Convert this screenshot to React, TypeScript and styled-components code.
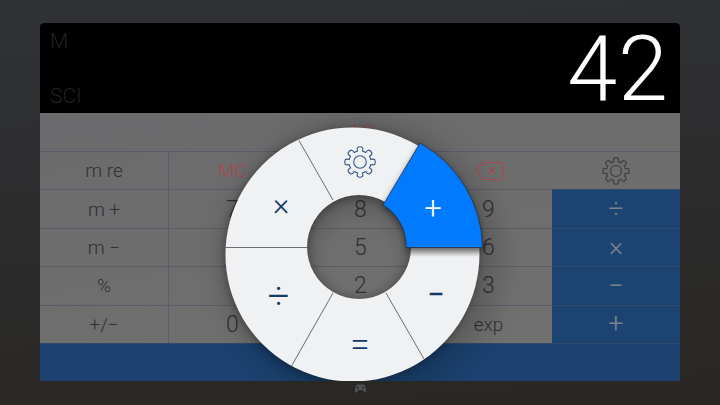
import styled, { createGlobalStyle } from 'styled-components'

const GlobalStyle = createGlobalStyle`
  html, body {
    margin: 0;
    height: 100%;
    overflow: hidden;
    background: #2b2b2b;
  }
  body {
    font-family: Roboto, 'Liberation Sans', sans-serif;
  }
`

// builds an 8 tooth cog outline around 0,0
function gearPath(outer: number, root: number, teeth = 8) {
  const step = (Math.PI * 2) / teeth
  const pt = (r: number, a: number) =>
    `${(r * Math.cos(a)).toFixed(2)} ${(r * Math.sin(a)).toFixed(2)}`
  let d = ''
  for (let i = 0; i < teeth; i++) {
    const a = i * step - Math.PI / 2
    d += `${i === 0 ? 'M' : 'L'}${pt(root, a - step * 0.3)} `
    d += `Q${pt(outer * 0.96, a - step * 0.3)} ${pt(outer, a - step * 0.18)} `
    d += `Q${pt(outer * 1.04, a)} ${pt(outer, a + step * 0.18)} `
    d += `Q${pt(outer * 0.96, a + step * 0.3)} ${pt(root, a + step * 0.3)} `
    d += `A${root} ${root} 0 0 1 ${pt(root, a + step * 0.7)} `
  }
  return d + 'Z'
}

function Gear({ x, y, r, color }: { x: number; y: number; r: number; color: string }) {
  return (
    <g transform={`translate(${x} ${y})`} fill="none" stroke={color} strokeWidth="1.1">
      <path d={gearPath(r, r * 0.74)} strokeLinejoin="round" />
      <circle r={r * 0.42} />
    </g>
  )
}

type Tone = 'red' | 'op' | 'digit'

const keys: { label: string; tone?: Tone }[] = [
  { label: 'm re' },
  { label: 'MC', tone: 'red' },
  { label: 'MR', tone: 'red' },
  { label: 'back', tone: 'red' },
  { label: 'gear' },
  { label: 'm +' },
  { label: '7', tone: 'digit' },
  { label: '8', tone: 'digit' },
  { label: '9', tone: 'digit' },
  { label: '÷', tone: 'op' },
  { label: 'm −' },
  { label: '4', tone: 'digit' },
  { label: '5', tone: 'digit' },
  { label: '6', tone: 'digit' },
  { label: '×', tone: 'op' },
  { label: '%' },
  { label: '1', tone: 'digit' },
  { label: '2', tone: 'digit' },
  { label: '3', tone: 'digit' },
  { label: '−', tone: 'op' },
  { label: '+/−' },
  { label: '0', tone: 'digit' },
  { label: '.', tone: 'digit' },
  { label: 'exp' },
  { label: '+', tone: 'op' },
]

const ring =
  'M352.5 127.5A127 127 0 1 1 352.4 127.5Z M359 195A52 52 0 1 0 359.1 195Z'

export default function App() {
  return (
    <>
      <GlobalStyle />
      <Page>
        <Calculator>
          <Display>
            <Flags>
              <span>M</span>
              <span>SCI</span>
            </Flags>
            <Result>42</Result>
          </Display>

          <ClearRow>AC</ClearRow>

          <Keypad>
            {keys.map((k) => (
              <Key key={k.label} $tone={k.tone}>
                {k.label === 'back' ? (
                  <svg width="30" height="20" viewBox="0 0 30 20" fill="none" stroke="#a8494b" strokeWidth="1.1">
                    <path d="M1.5 9.5 L9.5 1.5 H27 a1.5 1.5 0 0 1 1.5 1.5 V17 a1.5 1.5 0 0 1 -1.5 1.5 H9.5 Z" strokeLinejoin="round" />
                    <path d="M14.5 6 L21.5 13 M21.5 6 L14.5 13" />
                  </svg>
                ) : k.label === 'gear' ? (
                  <svg width="30" height="30" viewBox="0 0 30 30">
                    <Gear x={15} y={15} r={13} color="#3d3d3f" />
                  </svg>
                ) : (
                  k.label
                )}
              </Key>
            ))}
          </Keypad>

          <BlueBar />

          <Wheel viewBox="200 110 300 290">
            <defs>
              <radialGradient id="hole" cx="0.5" cy="0.6" r="0.6">
                <stop offset="0.5" stopColor="#000" stopOpacity="0" />
                <stop offset="1" stopColor="#000" stopOpacity="0.16" />
              </radialGradient>
              <linearGradient id="under" x1="0" y1="0" x2="0" y2="1">
                <stop offset="0" stopColor="#000" stopOpacity="0.35" />
                <stop offset="1" stopColor="#000" stopOpacity="0" />
              </linearGradient>
              <clipPath id="ringClip">
                <path d={ring} clipRule="evenodd" />
              </clipPath>
            </defs>

            <circle cx="359" cy="247" r="52" fill="url(#hole)" />
            <RingHalo cx="352.5" cy="254.5" r="127" />
            <RingShape d={ring} fillRule="evenodd" />

            <g stroke="#6c6d70" strokeWidth="1">
              <line x1="299" y1="140.5" x2="333" y2="200" />
              <line x1="225.5" y1="247.5" x2="307" y2="247.5" />
              <line x1="291.5" y1="366" x2="333" y2="293" />
              <line x1="386" y1="293" x2="424" y2="359" />
            </g>

            <rect x="405" y="247" width="80" height="10" fill="url(#under)" clipPath="url(#ringClip)" />

            <Gear x={360} y={162} r={15} color="#2f5585" />

            <ActiveSlice d="M383 205 L420 143 A122 122 0 0 1 482.6 247.5 L406 247.5 A47 47 0 0 0 383 205 Z" />

            <WheelGlyph x="281" y="215" $size={31}>×</WheelGlyph>
            <WheelGlyph x="278.5" y="309" $size={38}>÷</WheelGlyph>
            <WheelGlyph x="360" y="355.5" $size={35}>=</WheelGlyph>
            <WheelGlyph x="436" y="304.5" $size={31} $bold>−</WheelGlyph>
            <WheelGlyph x="433" y="219" $size={31} fill="#fff">+</WheelGlyph>
          </Wheel>
        </Calculator>

        <Dock width="13" height="9" viewBox="0 0 13 10">
          <path d="M3 0.5 H10 C11.5 0.5 12.6 5 12.8 8 C12.9 10 11 10 10 8.5 L9 7 H4 L3 8.5 C2 10 0.1 10 0.2 8 C0.4 5 1.5 0.5 3 0.5 Z M3.5 3 a1 1 0 1 0 .01 0 Z M9.5 3 a1 1 0 1 0 .01 0 Z" fillRule="evenodd" />
        </Dock>
      </Page>
    </>
  )
}

const Page = styled.div`
  width: 720px;
  height: 405px;
  box-sizing: border-box;
  padding-top: 23px;
  display: flex;
  flex-direction: column;
  align-items: center;
  background: linear-gradient(175deg, #303236 0%, #2c2c2d 50%, #292723 100%);
`

const Calculator = styled.div`
  position: relative;
  width: 640px;
  height: 358px;
  display: grid;
  grid-template-rows: 90px 38px 1fr 38px;
  border-radius: 4px;
  overflow: hidden;
  background: linear-gradient(170deg, #69696c, #727170);
`

const Display = styled.div`
  display: flex;
  justify-content: space-between;
  background: #000;
  padding: 0 11px 0 10px;
`

const Flags = styled.div`
  display: flex;
  flex-direction: column;
  justify-content: space-between;
  padding: 6px 0 5px;
  color: #232323;
  font-size: 21px;
  font-weight: 300;
  line-height: 24px;
`

const Result = styled.div`
  color: #fff;
  font-size: 90px;
  font-weight: 300;
  line-height: 87px;
  letter-spacing: 1px;
  padding-top: 3px;
`

const ClearRow = styled.div`
  display: flex;
  align-items: center;
  justify-content: center;
  color: #a24c4e;
  font-size: 20px;
  font-weight: 300;
  padding-left: 4px;
`

const Keypad = styled.div`
  display: grid;
  grid-template-columns: repeat(5, 128px);
  grid-auto-rows: 1fr;
`

const Key = styled.div<{ $tone?: Tone }>`
  display: flex;
  align-items: center;
  justify-content: center;
  box-sizing: border-box;
  border-top: 1px solid ${({ $tone }) => ($tone === 'op' ? '#2f4a6d' : '#5a5d69')};
  font-weight: 300;
  font-size: ${({ $tone }) =>
    $tone === 'op' ? '27px' : $tone === 'digit' ? '23px' : '19px'};
  color: ${({ $tone }) =>
    $tone === 'red' ? '#a8494b' : $tone === 'op' ? '#78838f' : '#2f2f30'};
  background: ${({ $tone }) => ($tone === 'op' ? '#1c4472' : 'transparent')};

  &:not(:nth-child(5n + 1)) {
    border-left: 1px solid #5a5d69;
  }
  &:nth-child(5n) {
    border-left: none;
  }
`

const BlueBar = styled.div`
  background: #1b4270;
  border-top: 1px solid #2f4a6d;
`

const Wheel = styled.svg`
  position: absolute;
  left: 160px;
  top: 87px;
  width: 300px;
  height: 290px;
  overflow: visible;
`

const RingHalo = styled.circle`
  fill: none;
  stroke: rgba(0, 0, 0, 0.42);
  stroke-width: 10;
  filter: blur(14px);
  transform: translate(8px, 6px);
`

const RingShape = styled.path`
  fill: #f0f1f3;
  filter: drop-shadow(0 2px 5px rgba(0, 0, 0, 0.38));
`

const ActiveSlice = styled.path`
  fill: #007aff;
  stroke: #2c3138;
  stroke-width: 0.8;
  filter: drop-shadow(0 3px 3px rgba(0, 0, 0, 0.4));
`

const WheelGlyph = styled.text<{ $size: number; $bold?: boolean }>`
  font-family: Roboto, 'Liberation Sans', sans-serif;
  font-size: ${({ $size }) => $size}px;
  font-weight: ${({ $bold }) => ($bold ? 400 : 300)};
  text-anchor: middle;
  fill: ${({ fill }) => fill || '#14386a'};
`

const Dock = styled.svg`
  margin-top: 3px;
  fill: #4e4f53;
`
